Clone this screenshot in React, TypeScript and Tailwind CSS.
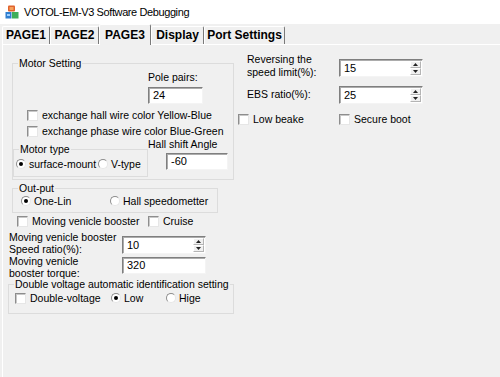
import type { ReactNode } from "react";

const ui = "font-['Liberation_Sans',Arial,sans-serif] text-[10.5px] leading-[13px] text-black";

function GroupBox({ label, className = "", children }: { label: string; className?: string; children?: ReactNode }) {
  return (
    <div className={`relative box-border border border-[#dcdcdc] ${className}`}>
      <span className="absolute left-[5px] top-[-6px] whitespace-nowrap bg-[#f0f0f0] px-[1px] leading-[11px]">{label}</span>
      {children}
    </div>
  );
}

function CheckBox({ label, className = "" }: { label: string; className?: string }) {
  return (
    <div className={`flex h-[16px] items-center ${className}`}>
      <span className="box-border h-[11px] w-[11px] shrink-0 border border-[#8d8d8d] border-b-[#e6e6e6] border-r-[#e6e6e6] bg-white shadow-[inset_1px_1px_0_#c8c8c8]" />
      <span className="ml-[4px] whitespace-nowrap">{label}</span>
    </div>
  );
}

function Radio({ label, checked = false, className = "" }: { label: string; checked?: boolean; className?: string }) {
  return (
    <div className={`flex h-[16px] items-center ${className}`}>
      <span className="box-border flex h-[10px] w-[10px] shrink-0 items-center justify-center rounded-full border border-[#8d8d8d] border-b-[#e6e6e6] border-r-[#e6e6e6] bg-white">
        {checked && <span className="h-[4px] w-[4px] rounded-full bg-black" />}
      </span>
      <span className="ml-[3px] whitespace-nowrap">{label}</span>
    </div>
  );
}

function TextBox({ value, className = "" }: { value: string; className?: string }) {
  return (
    <div className={`box-border flex items-center border border-[#7f7f7f] border-b-[#f4f4f4] border-r-[#f4f4f4] bg-white pl-[4px] text-[11px] shadow-[inset_1px_1px_0_#acacac] ${className}`}>
      {value}
    </div>
  );
}

function SpinHalf({ up }: { up?: boolean }) {
  return (
    <div className="box-border flex flex-1 items-center justify-center border border-white border-b-[#b4b4b4] border-r-[#b4b4b4] bg-[#f0f0f0]">
      <svg width="5" height="3" viewBox="0 0 5 3">
        {up ? <polygon points="2.5,0 5,3 0,3" fill="#222" /> : <polygon points="0,0 5,0 2.5,3" fill="#222" />}
      </svg>
    </div>
  );
}

function Numeric({ value, className = "" }: { value: string; className?: string }) {
  return (
    <div className={`box-border flex border border-[#7f7f7f] border-b-[#f4f4f4] border-r-[#f4f4f4] bg-white text-[11px] shadow-[inset_1px_1px_0_#acacac] ${className}`}>
      <div className="flex flex-1 items-center pl-[4px]">{value}</div>
      <div className="flex w-[12px] flex-col py-[1px] pr-[1px]">
        <SpinHalf up />
        <SpinHalf />
      </div>
    </div>
  );
}

function Tab({ label, selected = false, className = "" }: { label: string; selected?: boolean; className?: string }) {
  return (
    <div
      className={`box-border flex items-center justify-center rounded-t-[2px] border-l border-t border-r border-white border-r-[#7a7a7a] bg-[#f0f0f0] text-[12px] font-bold ${
        selected ? "relative z-10 -mb-[1px] h-[21px]" : "mt-[2px] h-[18px]"
      } ${className}`}
    >
      {label}
    </div>
  );
}

function AppIcon() {
  return (
    <svg width="14" height="14" viewBox="0 0 14 14">
      <rect x="3" y="0.5" width="7" height="6" rx="1" fill="#e0622c" />
      <rect x="4.5" y="2" width="4" height="3" fill="#f5a25d" />
      <rect x="0.5" y="7" width="6" height="6.5" fill="#2f7fd0" />
      <rect x="7" y="7" width="6.5" height="6.5" fill="#3fae5a" />
      <rect x="2" y="9" width="3" height="2" fill="#9fd0ff" />
    </svg>
  );
}

export default function App() {
  return (
    <div className={`flex h-[377px] w-[500px] flex-col overflow-hidden bg-[#f0f0f0] ${ui}`}>
      {/* Title bar */}
      <div className="flex h-[24px] shrink-0 items-center bg-white pl-[5px]">
        <AppIcon />
        <span className="ml-[5px] text-[11px] tracking-[-0.4px]">VOTOL-EM-V3 Software Debugging</span>
      </div>

      {/* Tab strip */}
      <div className="flex h-[20px] shrink-0 items-start pl-[2px]">
        <Tab label="PAGE1" className="w-[48px]" />
        <Tab label="PAGE2" className="w-[49px]" />
        <Tab label="PAGE3" selected className="w-[52px]" />
        <Tab label="Display" className="w-[53px]" />
        <Tab label="Port Settings" className="w-[81px]" />
      </div>

      {/* Tab page */}
      <div className="ml-[2px] flex flex-1 border-l border-t border-white">
        {/* Left column */}
        <div className="flex w-[235px] shrink-0 flex-col">
          <GroupBox label="Motor Setting" className="ml-[9px] mt-[18px] h-[117px] w-[222px]">
            <div className="flex flex-col">
              <div className="ml-[135px] mt-[7px] flex flex-col">
                <span>Pole pairs:</span>
                <TextBox value="24" className="mt-[3px] h-[17px] w-[55px]" />
              </div>
              <CheckBox label="exchange hall wire color Yellow-Blue" className="ml-[14px] mt-[3px]" />
              <CheckBox label="exchange phase wire color Blue-Green" className="ml-[14px]" />
              <div className="-mt-[1px] flex">
                <GroupBox label="Motor type" className="mt-[11px] h-[28px] w-[135px]">
                  <div className="flex pl-[2px] pt-[6px]">
                    <Radio label="surface-mount" checked className="w-[82px]" />
                    <Radio label="V-type" />
                  </div>
                </GroupBox>
                <div className="flex flex-col">
                  <span className="whitespace-nowrap">Hall shift Angle</span>
                  <TextBox value="-60" className="ml-[18px] mt-[2px] h-[17px] w-[62px]" />
                </div>
              </div>
            </div>
          </GroupBox>

          <GroupBox label="Out-put" className="ml-[9px] mt-[8px] h-[25px] w-[206px]">
            <div className="flex pl-[8px] pt-[4px]">
              <Radio label="One-Lin" checked className="w-[89px]" />
              <Radio label="Hall speedometter" />
            </div>
          </GroupBox>

          <div className="ml-[14px] flex">
            <CheckBox label="Moving venicle booster" className="w-[131px]" />
            <CheckBox label="Cruise" />
          </div>

          <div className="ml-[6px] mt-[2px] flex h-[24px] items-start">
            <div className="w-[113px] shrink-0 leading-[12px]">
              <div>Moving venicle booster</div>
              <div>Speed ratio(%):</div>
            </div>
            <Numeric value="10" className="mt-[5px] h-[18px] w-[84px]" />
          </div>

          <div className="ml-[6px] flex h-[24px] items-start">
            <div className="w-[113px] shrink-0 leading-[12px]">
              <div>Moving venicle</div>
              <div>booster torque:</div>
            </div>
            <TextBox value="320" className="mt-[2px] h-[17px] w-[84px]" />
          </div>

          <GroupBox label="Double voltage automatic identification setting" className="ml-[5px] mt-[5px] h-[30px] w-[226px]">
            <div className="flex pl-[6px] pt-[5px]">
              <CheckBox label="Double-voltage" className="w-[96px]" />
              <Radio label="Low" checked className="w-[55px]" />
              <Radio label="Hige" />
            </div>
          </GroupBox>
        </div>

        {/* Right column */}
        <div className="flex flex-col">
          <div className="mt-[8px] flex items-start">
            <div className="ml-[9px] w-[92px] shrink-0">
              <div>Reversing the</div>
              <div>speed limit(%):</div>
            </div>
            <Numeric value="15" className="mt-[6px] h-[18px] w-[84px]" />
          </div>
          <div className="mt-[7px] flex items-start">
            <div className="ml-[9px] mt-[2px] w-[92px] shrink-0">EBS ratio(%):</div>
            <Numeric value="25" className="h-[18px] w-[84px]" />
          </div>
          <div className="mt-[7px] flex">
            <CheckBox label="Low beake" className="w-[101px]" />
            <CheckBox label="Secure boot" />
          </div>
        </div>
      </div>
    </div>
  );
}
